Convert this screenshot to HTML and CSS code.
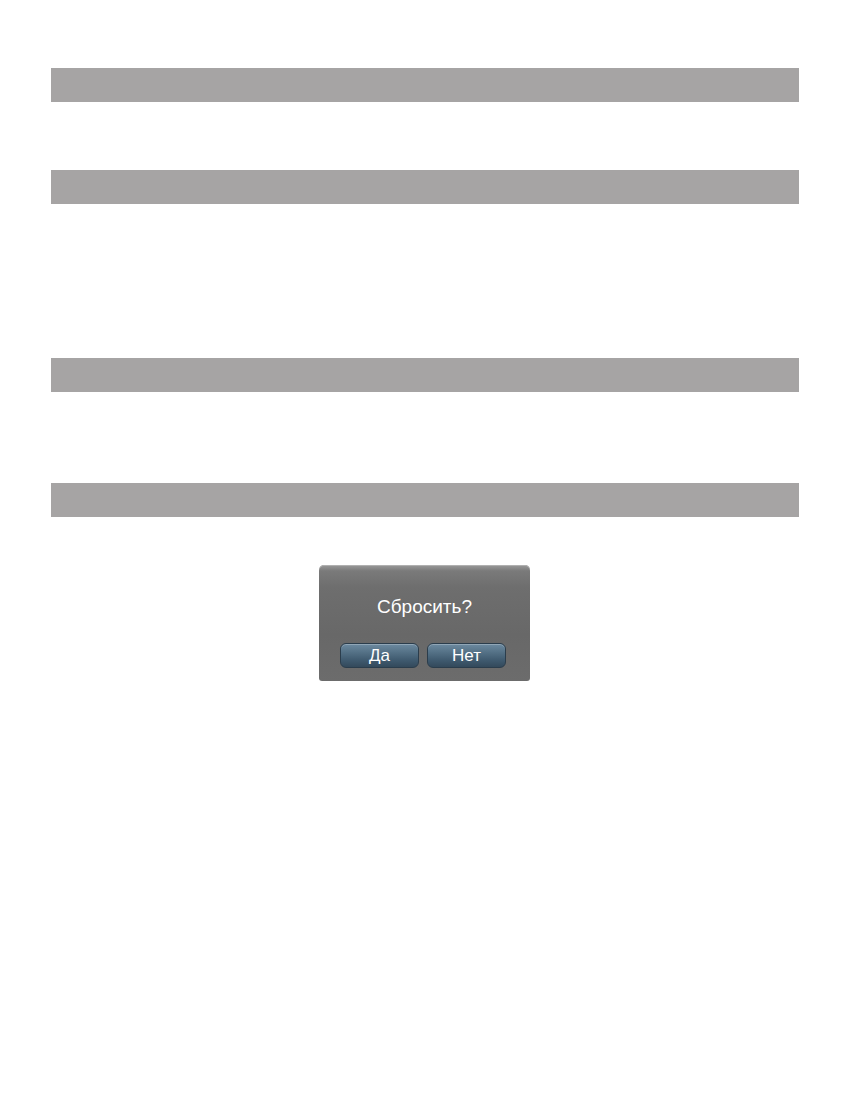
FILE: index.html
```html
<!DOCTYPE html>
<html lang="ru">
<head>
    <meta charset="UTF-8">
    <title>Сброс</title>
    <link rel="stylesheet" href="styles.css">
</head>
<body>
    <div class="page">
        <div class="bar bar-first"></div>
        <div class="section section-short"></div>
        <div class="bar"></div>
        <div class="section section-tall"></div>
        <div class="bar"></div>
        <div class="section section-mid"></div>
        <div class="bar"></div>

        <div class="dialog-wrap">
            <div class="dialog">
                <p class="dialog-title">Сбросить?</p>
                <div class="dialog-buttons">
                    <button class="btn">Да</button>
                    <button class="btn">Нет</button>
                </div>
            </div>
        </div>
    </div>
</body>
</html>
```

FILE: styles.css
```css
body {
    margin: 0;
    background: #fff;
    font-family: "Liberation Sans", Arial, sans-serif;
}
.page {
    width: 748px;
    margin-left: 51px;
    padding-top: 68px;
}
.bar {
    height: 34px;
    background-color: #a6a4a4;
}
.section-short {
    height: 68px;
}
.section-tall {
    height: 154px;
}
.section-mid {
    height: 91px;
}
.dialog-wrap {
    padding-top: 48px;
    padding-left: 268px;
}
.dialog {
    width: 211px;
    height: 116px;
    box-sizing: border-box;
    border-radius: 5px 5px 3px 3px;
    background: linear-gradient(to bottom, #9a9a9a 0px, #7a7a7a 6px, #6e6e6e 22px, #686868 60%, #6c6c6c 100%);
    box-shadow: inset 0 1px 0 #b0b0b0;
    padding-top: 31px;
}
.dialog-title {
    margin: 0;
    color: #fff;
    font-size: 19px;
    text-align: center;
    line-height: 22px;
}
.dialog-buttons {
    display: flex;
    gap: 8px;
    padding-left: 21px;
    margin-top: 25px;
}
.btn {
    width: 79px;
    height: 25px;
    border: 1px solid #2b3d4c;
    border-radius: 6px;
    background: linear-gradient(to bottom, #6d8aa0 0%, #557287 35%, #3f5a6f 70%, #33495b 100%);
    box-shadow: inset 0 1px 0 rgba(255, 255, 255, 0.25);
    color: #fff;
    font-family: "Liberation Sans", Arial, sans-serif;
    font-size: 17px;
    padding: 0;
    line-height: 22px;
}
```
